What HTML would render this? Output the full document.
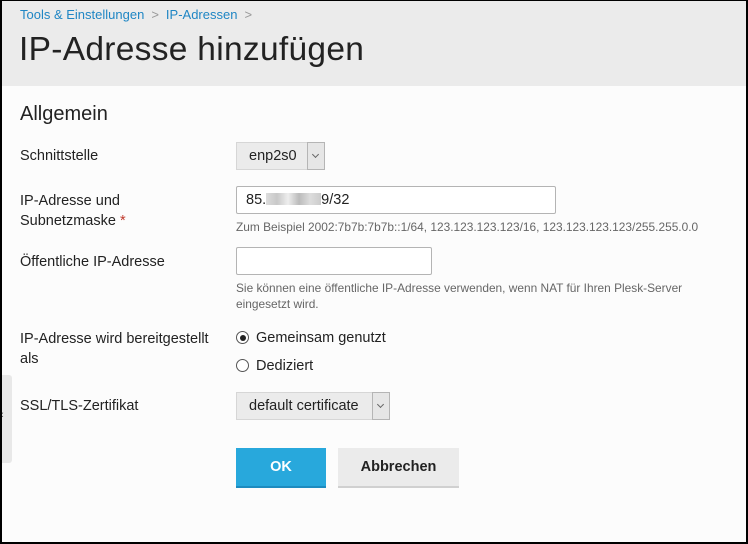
<!DOCTYPE html>
<html><head><meta charset="utf-8"><style>
*{box-sizing:border-box;margin:0;padding:0}
body{width:748px;height:544px;overflow:hidden;background:#fcfcfc;font-family:"Liberation Sans",sans-serif;color:#222;position:relative}
.frame{position:absolute;left:0;top:0;width:748px;height:544px;border:2px solid #000;border-top-width:1px;pointer-events:none;z-index:5}
.hdr{position:absolute;left:0;top:0;width:748px;height:86px;background:#ebebeb}
.a{position:absolute;white-space:nowrap}
.bc{top:7px;left:20px;font-size:13px;color:#1f86c4}
.bc span{color:#999;margin:0 7px}
h1{position:absolute;left:19px;top:31px;font-size:33.5px;font-weight:normal;color:#222;letter-spacing:0.3px}
h2{position:absolute;left:20px;top:103px;font-size:20px;font-weight:normal;color:#222}
.lbl{font-size:14.5px;color:#222;line-height:20px;left:20px}
.sel{position:absolute;height:28px;background:#ebebeb;border:1px solid #d6d6d6;font-size:14.5px;line-height:26px;padding-left:12px;color:#222}
.sel i{position:absolute;right:-1px;top:-1px;width:18px;height:28px;border:1px solid #b5b5b5;background:#e6e6e6}
.sel i::after{content:"";position:absolute;left:5px;top:9px;width:4px;height:4px;border-right:1px solid #666;border-bottom:1px solid #666;transform:rotate(45deg)}
.inp{position:absolute;height:28px;background:#fff;border:1px solid #b4b4b4;border-radius:2px;font-size:14.5px;line-height:26px;padding-left:9px}
.hint{font-size:11.9px;color:#666;line-height:16px}
.rad{position:absolute;width:13px;height:13px;border:1px solid #555;border-radius:50%;background:#fff}
.rad.on::after{content:"";position:absolute;left:2.5px;top:2.5px;width:6px;height:6px;border-radius:50%;background:#222}
.btn{position:absolute;height:40px;font-size:14.5px;font-weight:bold;text-align:center;line-height:40px}
</style></head><body>
<div class="hdr"></div>
<div class="a bc">Tools &amp; Einstellungen<span>&gt;</span>IP-Adressen<span>&gt;</span></div>
<h1>IP-Adresse hinzufügen</h1>
<h2>Allgemein</h2>
<div class="a lbl" style="top:146px">Schnittstelle</div>
<div class="sel" style="left:236px;top:142px;width:89px">enp2s0<i></i></div>
<div class="a lbl" style="top:191px">IP-Adresse und<br>Subnetzmaske <span style="color:#c0392b">*</span></div>
<div class="inp" style="left:236px;top:186px;width:320px">85.<span style="display:inline-block;width:55px;height:12px;background:linear-gradient(90deg,#ddd,#c8c8c8,#eee,#bbb,#ddd,#ccc);vertical-align:-1px"></span>9/32</div>
<div class="a hint" style="left:236px;top:219px">Zum Beispiel 2002:7b7b:7b7b::1/64, 123.123.123.123/16, 123.123.123.123/255.255.0.0</div>
<div class="a lbl" style="top:252px">Öffentliche IP-Adresse</div>
<div class="inp" style="left:236px;top:247px;width:196px"></div>
<div class="a hint" style="left:236px;top:280px">Sie können eine öffentliche IP-Adresse verwenden, wenn NAT für Ihren Plesk-Server<br>eingesetzt wird.</div>
<div class="a lbl" style="top:329px">IP-Adresse wird bereitgestellt<br>als</div>
<div class="rad on" style="left:236px;top:331px"></div>
<div class="a lbl" style="left:256px;top:328px">Gemeinsam genutzt</div>
<div class="rad" style="left:236px;top:359px"></div>
<div class="a lbl" style="left:256px;top:356px">Dediziert</div>
<div style="position:absolute;left:2px;top:375px;width:10px;height:88px;background:#e8e8e8;border-radius:0 3px 3px 0"></div>
<div class="a" style="left:0;top:409px;font-size:11px;color:#444">&lsaquo;</div>
<div class="a lbl" style="top:396px">SSL/TLS-Zertifikat</div>
<div class="sel" style="left:236px;top:392px;width:154px">default certificate<i></i></div>
<div class="btn" style="left:236px;top:448px;width:90px;background:#28a8dc;color:#fff;border-bottom:2px solid #1d8bbf;line-height:38px">OK</div>
<div class="btn" style="left:338px;top:448px;width:121px;background:#ebebeb;color:#222;border-bottom:2px solid #d0d0d0;line-height:38px">Abbrechen</div>
<div class="frame"></div>
</body></html>
